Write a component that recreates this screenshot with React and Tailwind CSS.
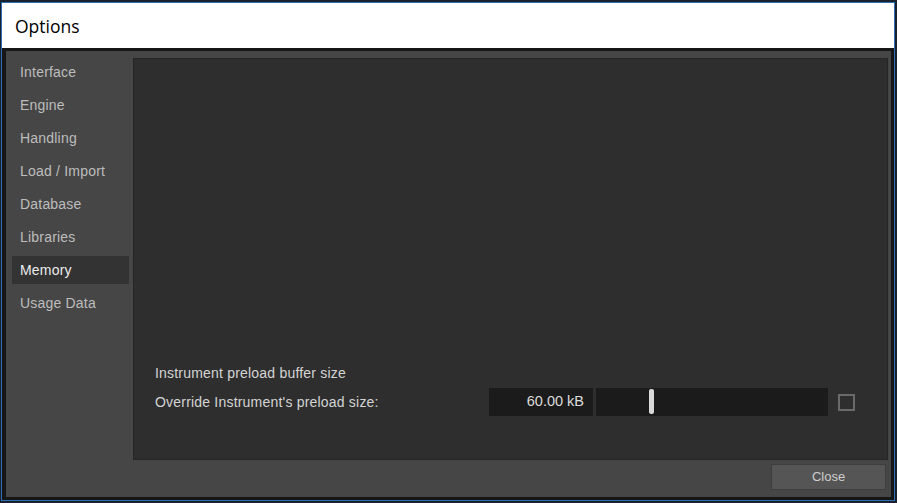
import { useState } from 'react'

const PAGES = ['Interface', 'Engine', 'Handling', 'Load / Import', 'Database', 'Libraries', 'Memory', 'Usage Data']

const ui = { fontFamily: '"Liberation Sans", Arial, sans-serif' }

export default function App() {
  const [page, setPage] = useState('Memory')
  const [override, setOverride] = useState(false)

  return (
    <div className="w-[897px] h-[503px] bg-[#18212c] pt-[2px] pl-[1px] overflow-hidden">
      <div className="w-[894px] h-[499px] border border-[#2e6db5] flex flex-col">
        {/* title bar */}
        <div className="h-[45px] shrink-0 bg-white flex items-center pl-[13px] pt-[2px] text-[17.5px] text-black"
          style={{ fontFamily: '"Open Sans", "Noto Sans", sans-serif' }}>
          Options
        </div>

        <div className="flex-1 flex flex-col bg-[#464646] border-t-[3px] border-l-4 border-r-[3px] border-b-[3px] border-[#161616] pt-[7px] pl-[6px] pr-[3px] pb-[7px]" style={ui}>
          <div className="flex-1 flex gap-[4px] min-h-0">
            {/* page list */}
            <div className="w-[117px] shrink-0 flex flex-col gap-[5px]">
              {PAGES.map(p => (
                <button key={p} onClick={() => setPage(p)}
                  className={`h-[28px] px-[8px] flex items-center text-left text-[14px] tracking-[0.2px] ${page === p ? 'bg-[#333333] text-[#ececec]' : 'text-[#bdbdbd]'}`}>
                  {p}
                </button>
              ))}
            </div>

            {/* page content */}
            <div className="flex-1 bg-[#2e2e2e] border border-[#262626] flex flex-col justify-end pl-[21px] pb-[43px]">
              {page === 'Memory' && (
                <>
                  <div className="h-[20px] flex items-center text-[14px] tracking-[0.2px] text-[#d4d4d4]">Instrument preload buffer size</div>
                  <div className="mt-[5px] h-[28px] flex items-center">
                    <div className="w-[334px] text-[14px] tracking-[0.2px] text-[#d4d4d4]">Override Instrument's preload size:</div>
                    <div className="w-[104px] h-full bg-[#1b1b1b] flex items-center justify-end pr-[9px] text-[14.5px] text-[#dcdcdc]">60.00 kB</div>
                    <div className="relative w-[232px] h-full ml-[3px] bg-[#1b1b1b]">
                      <div className="absolute left-[53px] top-[1px] w-[5px] h-[25px] rounded-[2px] bg-[#d9d9d9]" />
                    </div>
                    <button onClick={() => setOverride(!override)}
                      className="ml-[10px] w-[17px] h-[17px] border-2 border-[#6a6a6a] flex items-center justify-center">
                      {override && <div className="w-[7px] h-[7px] bg-[#cfcfcf]" />}
                    </button>
                  </div>
                </>
              )}
            </div>
          </div>

          <div className="flex justify-end mt-[4px]">
            <button className="w-[115px] h-[26px] mr-[2px] bg-[#555555] border border-[#3e3e3e] text-[13px] text-[#cfcfcf]">
              Close
            </button>
          </div>
        </div>
      </div>
    </div>
  )
}
